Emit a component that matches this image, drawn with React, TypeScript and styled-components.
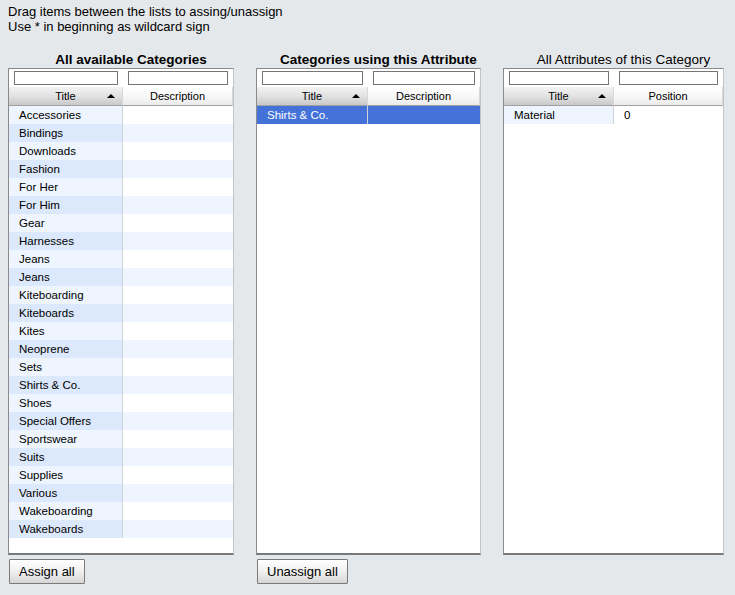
import styled, { createGlobalStyle } from "styled-components";

const GlobalStyle = createGlobalStyle`
  html, body {
    margin: 0;
    padding: 0;
    background: #e5e8eb;
    font-family: "Liberation Sans", Arial, sans-serif;
    color: #000;
  }
`;

type Row = { title: string; second: string };

type Column = { label: string; sorted?: boolean };

type Panel = {
  heading: string;
  bold: boolean;
  width: number;
  columns: [Column, Column];
  splitAt: number;
  rows: Row[];
  selected?: number;
  action?: string;
};

const categories = [
  "Accessories",
  "Bindings",
  "Downloads",
  "Fashion",
  "For Her",
  "For Him",
  "Gear",
  "Harnesses",
  "Jeans",
  "Jeans",
  "Kiteboarding",
  "Kiteboards",
  "Kites",
  "Neoprene",
  "Sets",
  "Shirts & Co.",
  "Shoes",
  "Special Offers",
  "Sportswear",
  "Suits",
  "Supplies",
  "Various",
  "Wakeboarding",
  "Wakeboards",
];

const panels: Panel[] = [
  {
    heading: "All available Categories",
    bold: true,
    width: 226,
    columns: [{ label: "Title", sorted: true }, { label: "Description" }],
    splitAt: 114,
    rows: categories.map((c) => ({ title: c, second: "" })),
    action: "Assign all",
  },
  {
    heading: "Categories using this Attribute",
    bold: true,
    width: 225,
    columns: [{ label: "Title", sorted: true }, { label: "Description" }],
    splitAt: 111,
    rows: [{ title: "Shirts & Co.", second: "" }],
    selected: 0,
    action: "Unassign all",
  },
  {
    heading: "All Attributes of this Category",
    bold: false,
    width: 221,
    columns: [{ label: "Title", sorted: true }, { label: "Position" }],
    splitAt: 110,
    rows: [{ title: "Material", second: "0" }],
  },
];

const Page = styled.div`
  padding: 4px 8px 0 8px;
  width: 735px;
  height: 595px;
  box-sizing: border-box;
`;

const Intro = styled.div`
  font-size: 13px;
  line-height: 15px;
`;

const Columns = styled.div`
  display: flex;
  gap: 22px;
  margin-top: 18px;
`;

const PanelWrap = styled.div<{ $w: number }>`
  width: ${(p) => p.$w}px;
  display: flex;
  flex-direction: column;
`;

const Heading = styled.div<{ $bold: boolean }>`
  font-size: 13.5px;
  line-height: 16px;
  font-weight: ${(p) => (p.$bold ? "bold" : "normal")};
  text-align: center;
  padding-left: 20px;
  white-space: nowrap;
`;

const Box = styled.div`
  height: 487px;
  background: #fff;
  border-top: 1px solid #8a8a8a;
  border-left: 1px solid #8a8a8a;
  border-bottom: 2px solid #7a7a7a;
  border-right: 1px solid #c4c4c4;
  box-sizing: border-box;
`;

const Grid = styled.div<{ $split: number }>`
  display: grid;
  grid-template-columns: ${(p) => p.$split}px 1fr;
`;

const FilterRow = styled.div`
  display: flex;
  align-items: center;
  justify-content: center;
  height: 18px;
  background: #fff;
`;

const FilterInput = styled.div`
  width: calc(100% - 10px);
  height: 14px;
  border: 1px solid #767676;
  box-sizing: border-box;
  background: #fff;
`;

const HeaderCell = styled.div<{ $sorted: boolean }>`
  position: relative;
  height: 19px;
  box-sizing: border-box;
  line-height: 18px;
  font-size: 11px;
  text-align: center;
  border-bottom: 1px solid #a0a0a0;
  border-right: 1px solid #d8d8d8;
  background: ${(p) =>
    p.$sorted
      ? "linear-gradient(#f3f3f3, #e2e2e2 50%, #c9c9c9)"
      : "linear-gradient(#ffffff, #f6f6f6 60%, #ebebeb)"};
`;

const SortArrow = styled.span`
  position: absolute;
  right: 7px;
  top: 7px;
  width: 0;
  height: 0;
  border-left: 4px solid transparent;
  border-right: 4px solid transparent;
  border-bottom: 4px solid #000;
`;

const Cell = styled.div<{ $tone: "a" | "b" | "c" | "d" | "sel"; $first: boolean }>`
  height: 18px;
  line-height: 18px;
  font-size: 11.5px;
  padding-left: 10px;
  white-space: nowrap;
  overflow: hidden;
  border-right: ${(p) => (p.$first ? "1px solid #cfd4da" : "none")};
  background: ${(p) =>
    ({ a: "#eef5fe", b: "#dce8fb", c: "#ffffff", d: "#eef5fe", sel: "#4472d8" })[p.$tone]};
  color: ${(p) => (p.$tone === "sel" ? "#fff" : "#000")};
`;

const Button = styled.button`
  align-self: flex-start;
  margin-top: 4px;
  margin-left: 1px;
  height: 25px;
  padding: 0 9px;
  font-family: "Liberation Sans", Arial, sans-serif;
  font-size: 13px;
  color: #000;
  border: 1px solid #7a7a7a;
  border-radius: 1px;
  background: linear-gradient(#ffffff, #f0f0f0 50%, #d6d6d6);
`;

function ListPanel({ panel }: { panel: Panel }) {
  return (
    <PanelWrap $w={panel.width}>
      <Heading $bold={panel.bold}>{panel.heading}</Heading>
      <Box>
        <Grid $split={panel.splitAt}>
          <FilterRow>
            <FilterInput />
          </FilterRow>
          <FilterRow>
            <FilterInput />
          </FilterRow>
          {panel.columns.map((col) => (
            <HeaderCell key={col.label} $sorted={!!col.sorted}>
              {col.label}
              {col.sorted && <SortArrow />}
            </HeaderCell>
          ))}
          {panel.rows.map((row, i) => {
            const sel = panel.selected === i;
            return [
              <Cell key={`t${i}`} $first $tone={sel ? "sel" : i % 2 ? "b" : "a"}>
                {row.title}
              </Cell>,
              <Cell key={`s${i}`} $first={false} $tone={sel ? "sel" : i % 2 ? "d" : "c"}>
                {row.second}
              </Cell>,
            ];
          })}
        </Grid>
      </Box>
      {panel.action && <Button>{panel.action}</Button>}
    </PanelWrap>
  );
}

export default function App() {
  return (
    <Page>
      <GlobalStyle />
      <Intro>
        Drag items between the lists to assing/unassign
        <br />
        Use * in beginning as wildcard sign
      </Intro>
      <Columns>
        {panels.map((p) => (
          <ListPanel key={p.heading} panel={p} />
        ))}
      </Columns>
    </Page>
  );
}
